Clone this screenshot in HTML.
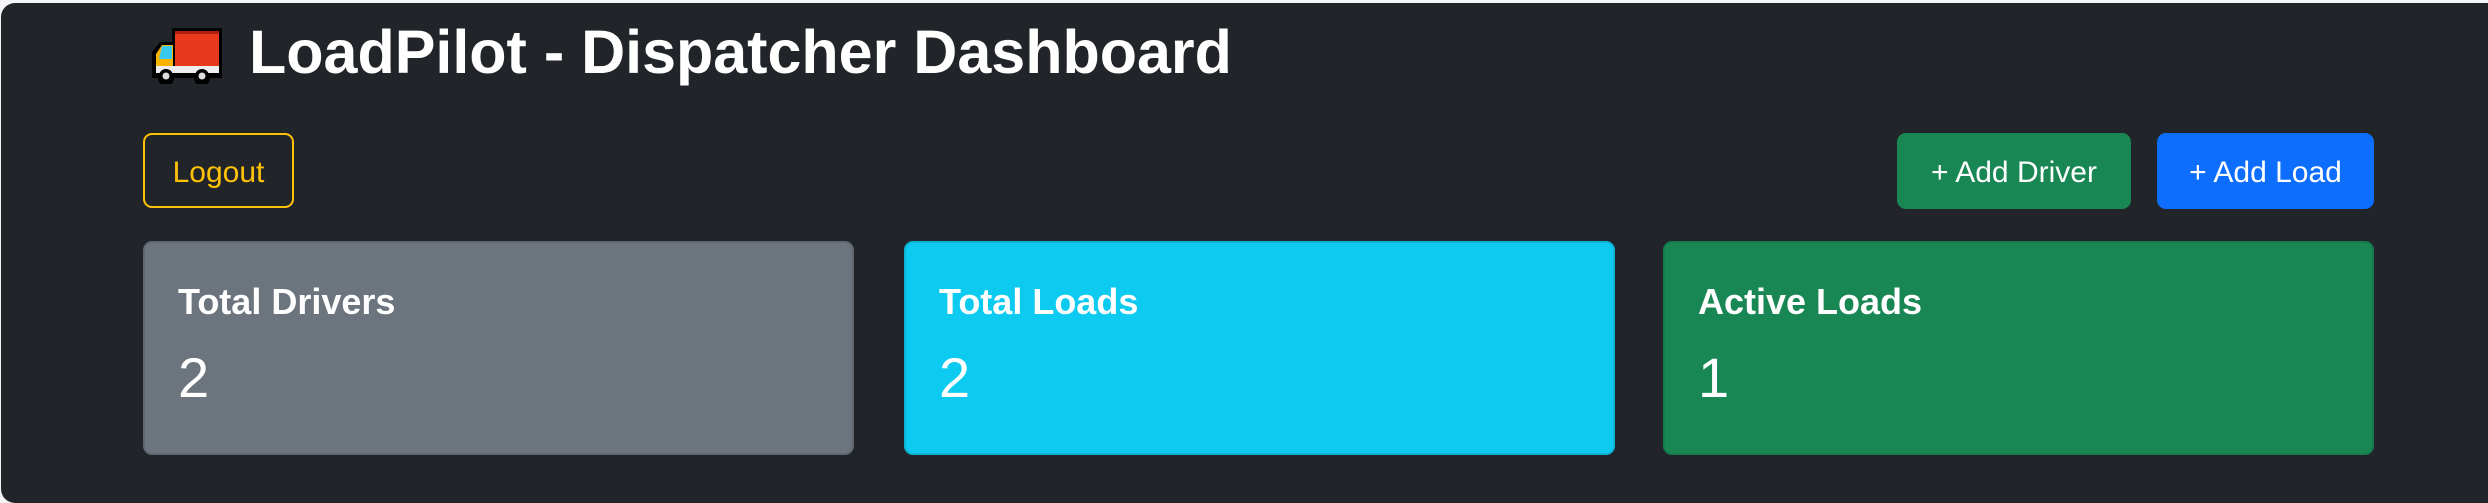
<!DOCTYPE html>
<html><head><meta charset="utf-8"><style>
html,body{margin:0;padding:0;width:2488px;height:480px;overflow:hidden;background:#f4f4f6;font-family:"Liberation Sans",sans-serif;}
.panel{position:absolute;left:1px;top:3px;width:2520px;height:500px;background:#212529;border-radius:14px;}
.title{position:absolute;left:249px;top:17px;color:#fff;font-size:61px;font-weight:bold;white-space:nowrap;}
.btn{position:absolute;box-sizing:border-box;border-radius:9px;color:#fff;font-size:30px;display:flex;align-items:center;justify-content:center;padding-top:4px;}
.logout{left:143px;top:133px;width:151px;height:75px;border:2px solid #ffc107;color:#ffc107;}
.drv{left:1897px;top:133px;width:234px;height:76px;background:#198754;}
.ld{left:2157px;top:133px;width:217px;height:76px;background:#0d6efd;}
.card{position:absolute;top:241px;width:711px;height:214px;border-radius:9px;box-sizing:border-box;color:#fff;}
.card .t{position:absolute;left:33px;top:38px;font-size:36px;font-weight:bold;}
.card .n{position:absolute;left:33px;top:102px;font-size:56px;}
</style></head><body>
<div class="panel"></div>
<svg style="position:absolute;left:150px;top:26px" width="76" height="58" viewBox="0 0 76 58">
<path d="M22 2h50v50H60a8 8 0 0 1-16 0H24a8 8 0 0 1-16 0H2V26l8-10h12z" fill="#000"/>
<rect x="25" y="5" width="44" height="41" fill="#e8391c"/>
<rect x="25" y="5" width="44" height="3" fill="#b01e12"/>
<path d="M6 28l6-9h11v27H6z" fill="#f9b300"/>
<path d="M12 20h10v13H9z" fill="#39c8f0"/>
<rect x="6" y="40" width="63" height="7" fill="#eee"/>
<circle cx="16" cy="50" r="7" fill="#000"/><circle cx="16" cy="50" r="3.5" fill="#ddd"/>
<circle cx="52" cy="50" r="7" fill="#000"/><circle cx="52" cy="50" r="3.5" fill="#ddd"/>
</svg>
<div class="title">LoadPilot - Dispatcher Dashboard</div>
<div class="btn logout">Logout</div>
<div class="btn drv">+ Add Driver</div>
<div class="btn ld">+ Add Load</div>
<div class="card" style="left:143px;background:#6c757d;border:2px solid #5f676f"><div class="t">Total Drivers</div><div class="n">2</div></div>
<div class="card" style="left:904px;background:#0dcaf0;border:2px solid #0cb5d8"><div class="t">Total Loads</div><div class="n">2</div></div>
<div class="card" style="left:1663px;background:#198754;border:2px solid #167a4b"><div class="t">Active Loads</div><div class="n">1</div></div>
</body></html>
